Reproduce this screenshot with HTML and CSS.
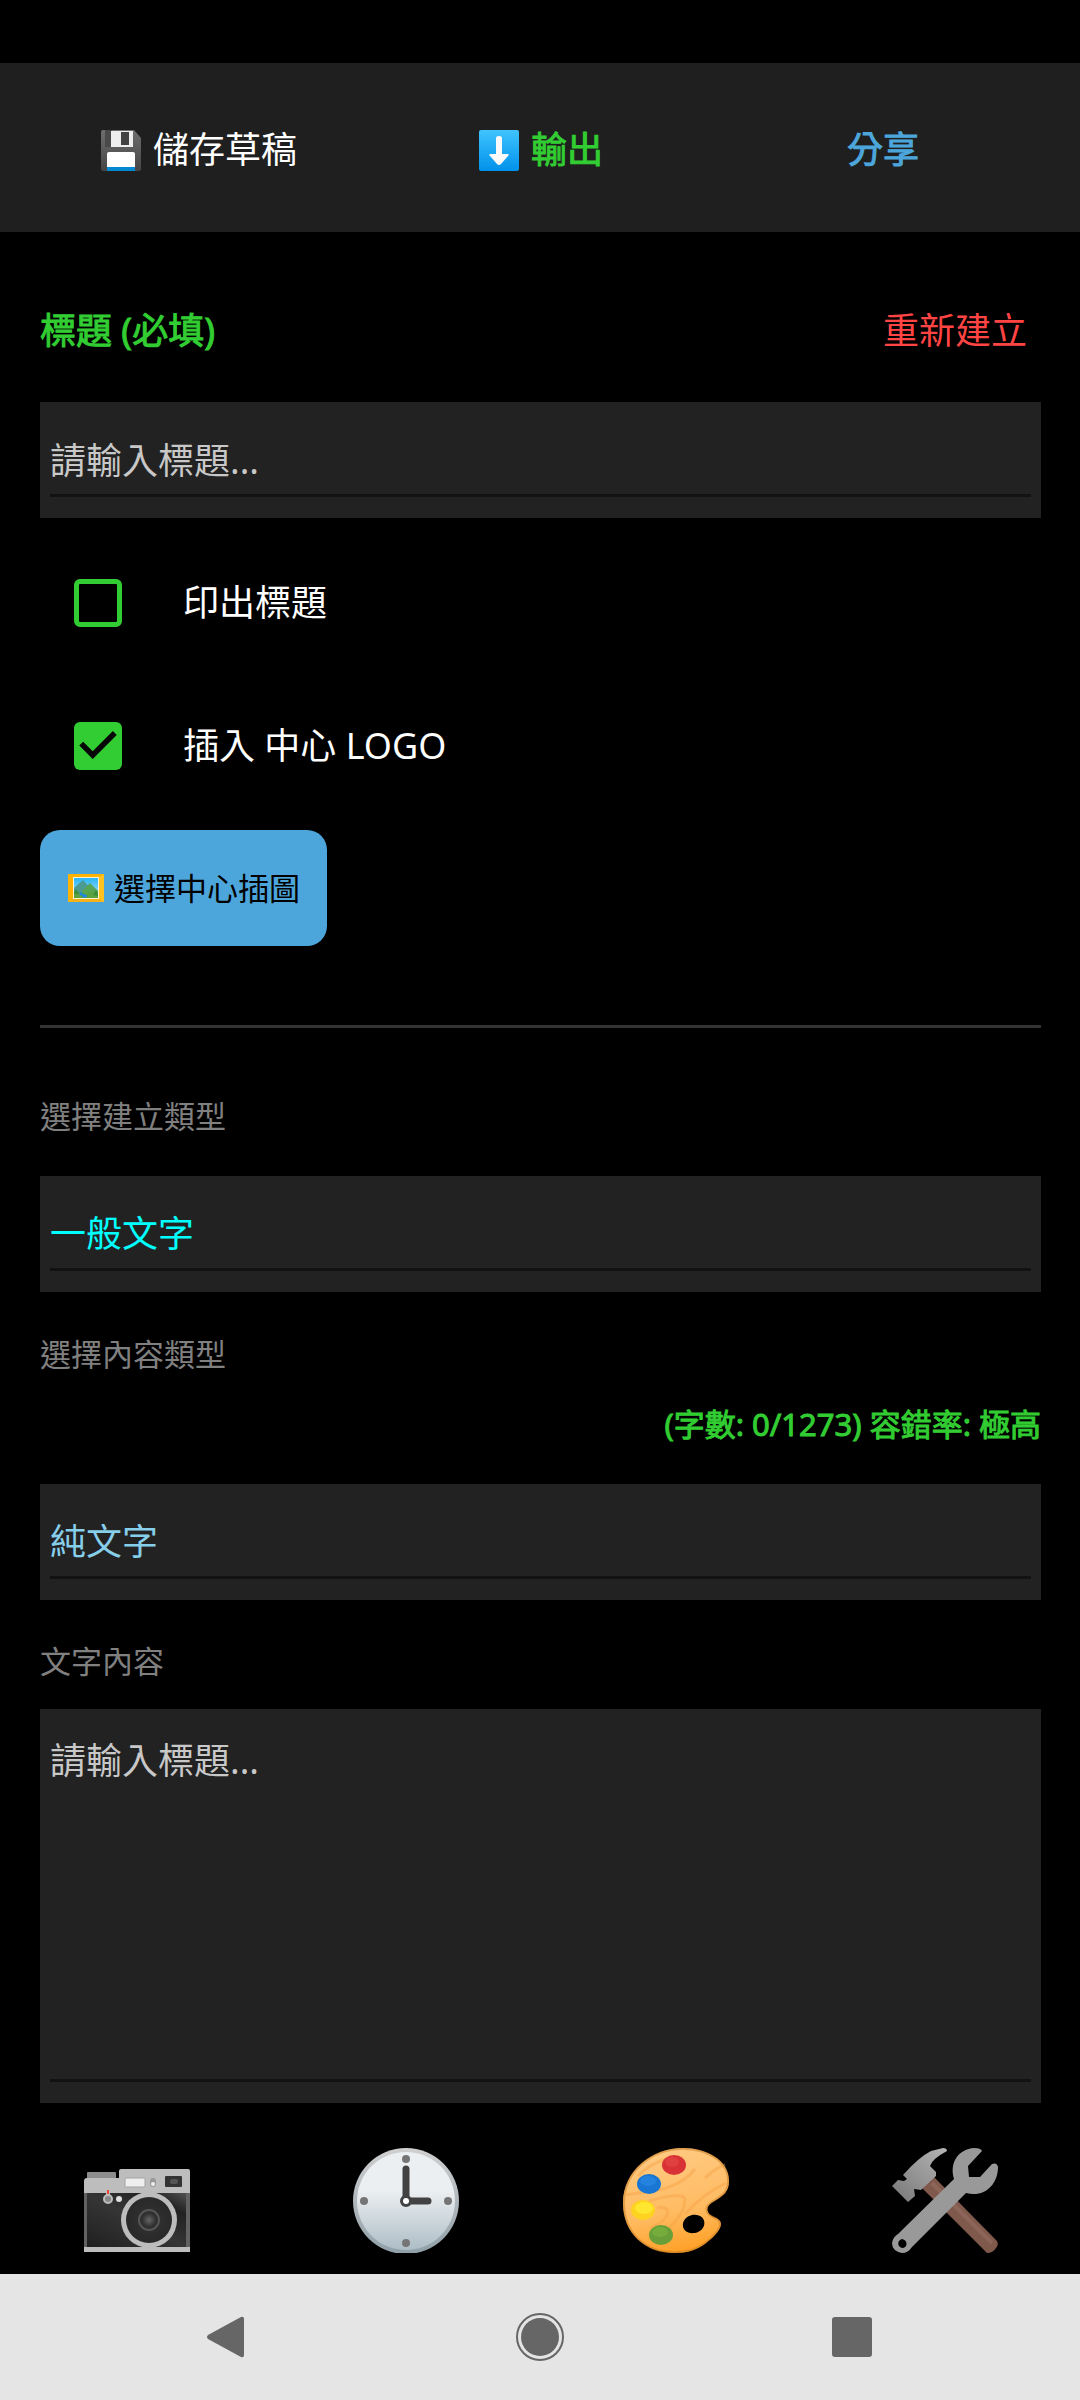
FILE: index.html
```html
<!DOCTYPE html>
<html lang="zh-Hant">
<head>
  <meta charset="UTF-8" />
  <meta name="viewport" content="width=device-width, initial-scale=1" />
  <title>建立 QR Code</title>
  <link rel="stylesheet" href="styles.css">
</head>
<body>
  <header class="toolbar">
    <button type="button" class="tool save">
      <svg class="emoji" viewBox="0 0 40 41" aria-hidden="true">
        <defs>
          <linearGradient id="disk" x1="0" y1="0" x2="0" y2="1">
            <stop offset="0" stop-color="#6e6e6e" /><stop offset="1" stop-color="#454545" />
          </linearGradient>
        </defs>
        <path d="M2 0h31l7 8v31q0 2-2 2H2q-2 0-2-2V2q0-2 2-2z" fill="url(#disk)" />
        <path d="M4 0h7v17H4z" fill="#4a4a4a" />
        <path d="M10 1h22v16H10z" fill="#eee" />
        <path d="M20 2h8v13h-8z" fill="#424242" />
        <path d="M6 24q0-2 2-2h24q2 0 2 2v16H6z" fill="#fff" />
        <path d="M6 37h28v4H6z" fill="#0288d1" />
      </svg>
      儲存草稿
    </button>
    <button type="button" class="tool export">
      <svg class="emoji" viewBox="0 0 40 41" aria-hidden="true">
        <defs>
          <linearGradient id="arrow" x1="0" y1="0" x2="0" y2="1">
            <stop offset="0" stop-color="#40c4ff" /><stop offset="1" stop-color="#0091ea" />
          </linearGradient>
        </defs>
        <rect width="40" height="41" rx="2" fill="url(#arrow)" />
        <path d="M17 8q0-2 3-2t3 2v16h5q3 0 1 2l-7 8q-2 2-4 0l-7-8q-2-2 1-2h5z" fill="#fafafa" />
      </svg>
      輸出
    </button>
    <button type="button" class="tool share">分享</button>
  </header>

  <main>
    <div class="title-row">
      <label for="title" class="title-label">標題 (必填)</label>
      <button type="button" class="reset">重新建立</button>
    </div>
    <div class="field">
      <input type="text" id="title" placeholder="請輸入標題..." />
    </div>

    <div class="checks">
      <label class="check"><input type="checkbox" />印出標題</label>
      <label class="check"><input type="checkbox" checked />插入 中心 LOGO</label>
    </div>

    <button type="button" class="pick">
      <svg class="emoji" viewBox="0 0 36 28" aria-hidden="true">
        <defs>
          <linearGradient id="sky" x1="0" y1="0" x2="0" y2="1">
            <stop offset="0" stop-color="#29b6f6" /><stop offset="1" stop-color="#b3e5fc" />
          </linearGradient>
        </defs>
        <rect width="36" height="28" rx="1" fill="#ffb300" />
        <path d="M0 28l5-4h26l5 4z" fill="#f5b31b" />
        <path d="M36 0l-5 3v21l5 4z" fill="#ffc21f" />
        <rect x="5" y="3" width="26" height="22" fill="#fff3d0" />
        <rect x="6" y="4" width="24" height="20" fill="url(#sky)" />
        <path d="M6 14l9-8 8 9v8H6z" fill="#4b9a94" />
        <path d="M14 17l8-8 8 8v7H14z" fill="#56a556" />
        <path d="M6 17l10 2 14-2v7H6z" fill="#5aa340" />
        <path d="M10 18q6 0 4 2 6 0 5 3l-5 1q3-2-3-3 3-2-1-3z" fill="#1e88e5" />
        <path d="M6 19l2-4 3 5H6zM25 21l3-5 2 4v2z" fill="#388e3c" />
      </svg>
      選擇中心插圖
    </button>

    <hr />

    <label for="kind" class="caption">選擇建立類型</label>
    <div class="field">
      <select id="kind" class="kind">
        <option>一般文字</option>
      </select>
    </div>

    <label for="content-type" class="caption content-caption">選擇內容類型</label>
    <p class="count">(字數: 0/1273) 容錯率: 極高</p>
    <div class="field">
      <select id="content-type" class="content-type">
        <option>純文字</option>
      </select>
    </div>

    <label for="content" class="caption text-caption">文字內容</label>
    <div class="field area">
      <textarea id="content" rows="7" placeholder="請輸入標題..."></textarea>
    </div>
  </main>

  <nav class="tabs">
    <button type="button" aria-label="掃描">
      <svg viewBox="0 0 106 105">
        <defs>
          <radialGradient id="lens"><stop offset="0" stop-color="#666" /><stop offset=".3" stop-color="#303030" /><stop offset="1" stop-color="#292929" /></radialGradient>
          <linearGradient id="leather" x1="0" y1="1" x2="1" y2="0">
            <stop offset="0" stop-color="#202020" /><stop offset=".5" stop-color="#353535" /><stop offset=".8" stop-color="#222" /><stop offset="1" stop-color="#505050" />
          </linearGradient>
        </defs>
        <rect x="3" y="24" width="29" height="9" rx="1" fill="#8c8c8c" />
        <path d="M0 33q0-3 3-3h32v-7q0-2 2-2h67q2 0 2 2v81H0z" fill="#bdbdbd" />
        <path d="M0 45h106v54H0z" fill="#616161" />
        <path d="M3 45h99v54H3z" fill="url(#leather)" />
        <rect x="41" y="30" width="20" height="9" rx="1" fill="#eee" stroke="#a5a5a5" />
        <rect x="66" y="30" width="6" height="9" rx="3" fill="#999" />
        <circle cx="69" cy="36" r="2" fill="#eee" />
        <rect x="81" y="28" width="17" height="11" rx="1" fill="#333" />
        <rect x="86" y="31" width="8" height="5" rx="2" fill="#555" />
        <circle cx="65" cy="72" r="28" fill="#bdbdbd" />
        <circle cx="65" cy="72" r="23" fill="url(#lens)" />
        <circle cx="65" cy="72" r="10" fill="none" stroke="#555" stroke-width="2" />
        <rect x="22" y="41" width="4" height="9" rx="2" fill="#bdbdbd" />
        <circle cx="24" cy="51" r="4" fill="#888" stroke="#bdbdbd" stroke-width="2" />
        <rect x="23" y="42" width="2" height="4" fill="#f44336" />
        <circle cx="35" cy="51" r="3" fill="#e0e0e0" />
      </svg>
    </button>
    <button type="button" aria-label="歷史紀錄">
      <svg viewBox="0 0 106 105">
        <defs>
          <linearGradient id="face" x1="0" y1="0" x2="0" y2="1">
            <stop offset="0" stop-color="#eceff1" /><stop offset=".4" stop-color="#eceff1" /><stop offset="1" stop-color="#adbdc6" />
          </linearGradient>
          <linearGradient id="rim" x1="0" y1="0" x2="0" y2="1">
            <stop offset="0" stop-color="#d0cfd0" /><stop offset="1" stop-color="#90a0a8" />
          </linearGradient>
        </defs>
        <circle cx="53" cy="53" r="53" fill="url(#rim)" />
        <circle cx="53" cy="53" r="49" fill="url(#face)" />
        <g fill="#757575">
          <circle cx="53" cy="11" r="4" /><circle cx="95" cy="53" r="4" />
          <circle cx="53" cy="95" r="4" /><circle cx="11" cy="53" r="4" />
        </g>
        <path d="M53 21v32h22" fill="none" stroke="#424242" stroke-width="7" stroke-linecap="round" />
        <circle cx="53" cy="53" r="6" fill="#424242" />
        <circle cx="53" cy="53" r="3" fill="#fff" />
      </svg>
    </button>
    <button type="button" aria-label="色彩">
      <svg viewBox="0 0 106 105">
        <defs>
          <linearGradient id="wood" x1=".4" y1="0" x2=".6" y2="1">
            <stop offset="0" stop-color="#ffca82" /><stop offset=".6" stop-color="#ffbb62" /><stop offset="1" stop-color="#ff9f24" />
          </linearGradient>
        </defs>
        <path fill-rule="evenodd" fill="url(#wood)" d="M60 0C83 0 106 12 106 33c0 10-5 14-13 19-7 4-10 7-8 12 2 5 9 5 12 9 4 6-6 16-14 22-9 7-19 10-31 10C22 105 0 85 0 55 0 23 29 0 60 0zM69 67c-13 3-12 20 3 18 13-2 13-20-3-18z" />
        <g fill="none" stroke="#f9a64a" stroke-width="3" opacity=".5">
          <path d="M3 47c25-4 52-4 69-26M26 53c20-6 35-7 36-2 0 15-15 32-33 40M34 60c18-3 12 12-6 20M82 30q12-11 20-13M62 66q18-20 41-31M15 28Q35 8 60 10" />
          <path d="M60 1C83 1 105 12 105 33c0 10-5 14-13 19-7 4-10 7-8 12 2 5 9 5 12 9 4 6-6 16-14 22-9 7-19 9-31 9C22 104 1 85 1 55 1 23 29 1 60 1z" stroke="#c77d23" stroke-width="2" />
        </g>
        <ellipse cx="51" cy="17" rx="12" ry="10" fill="#d93236" />
        <ellipse cx="49" cy="14" rx="7" ry="5" fill="#e0403f" />
        <ellipse cx="26" cy="36" rx="12" ry="10" fill="#1976d2" />
        <ellipse cx="25" cy="33" rx="8" ry="5" fill="#2383de" />
        <ellipse cx="20" cy="62" rx="12" ry="10" fill="#fdd220" />
        <ellipse cx="21" cy="60" rx="9" ry="6" fill="#ffe72f" />
        <ellipse cx="38" cy="87" rx="12" ry="10" fill="#689f38" />
        <ellipse cx="37" cy="84" rx="8" ry="5" fill="#76ac3b" />
      </svg>
    </button>
    <button type="button" aria-label="設定">
      <svg viewBox="0 0 106 105">
        <defs>
          <linearGradient id="head" x1="0" y1="1" x2="1" y2="0">
            <stop offset="0" stop-color="#777" /><stop offset="1" stop-color="#b5b5b5" />
          </linearGradient>
        </defs>
        <path d="M29 39l13-10 63 64q2 4-1 7-3 5-9 5z" fill="#80594d" />
        <path d="M40 35l60 60" stroke="#8d6558" stroke-width="4" />
        <path d="M0 38l6-6 6 1 3-2-4-4q16-18 28-24l12-3q4 0 4 3-15 8-17 15l6 6v4L29 42l-7-1 1 7-7 6z" fill="url(#head)" />
        <path fill-rule="evenodd" fill="#999" d="M62 31C57 14 67 1 82 0q7 0 8 3L76 18l1 11h11l12-13q5-2 6 3c0 18-14 31-32 26L20 99q-4 6-10 6Q0 103 0 95q1-6 6-9zM10 91c-5 1-5 8 0 9 6 0 6-8 0-9z" />
      </svg>
    </button>
  </nav>

  <footer class="system-bar">
    <button type="button" aria-label="返回">
      <svg viewBox="0 0 48 48">
        <path d="M4 22L37 4q3-1 3 2v36q0 3-3 2L4 26q-2-2 0-4z" />
      </svg>
    </button>
    <button type="button" aria-label="主畫面">
      <svg viewBox="0 0 48 48">
        <circle cx="24" cy="24" r="23" fill="none" stroke="#666" stroke-width="2" />
        <circle cx="24" cy="24" r="19" />
      </svg>
    </button>
    <button type="button" aria-label="最近使用">
      <svg viewBox="0 0 48 48">
        <rect x="4" y="4" width="40" height="40" rx="3" />
      </svg>
    </button>
  </footer>
</body>
</html>
```
FILE: styles.css
```css
* {
  box-sizing: border-box;
}
body {
  font-family: 'Noto Sans', 'Noto Sans CJK TC', sans-serif;
  font-size: 36px;
  line-height: 48px;
  background: #000;
  color: #fff;
  margin: 0;
  padding-top: 63px;
  min-height: 100vh;
  display: flex;
  flex-direction: column;
}
button, input, select, textarea {
  font: inherit;
  color: inherit;
  background: none;
  border: 0;
  border-radius: 0;
  margin: 0;
  padding: 0;
}
button {
  cursor: pointer;
}
svg {
  display: block;
}

.toolbar {
  display: grid;
  grid-template-columns: repeat(3, 1fr);
  padding: 0 26px 0 28px;
  background: #1f1f1f;
}
.tool {
  display: flex;
  align-items: center;
  justify-content: center;
  gap: 12px;
  padding: 63px 0 58px;
}
.tool .emoji {
  width: 40px;
  height: 41px;
}
.export, .share, .title-label, .count {
  color: #32cd32;
  -webkit-text-stroke: 1px;
}
.share {
  color: #4da6db;
}

main {
  padding: 28px 39px 0 40px;
}
.title-row {
  display: flex;
  align-items: center;
  justify-content: space-between;
  height: 142px;
}
.reset {
  color: #ff4444;
  padding: 0 14px;
}

.field {
  background: #222;
  padding: 34px 10px 21px;
}
.field input, .field select, .field textarea {
  display: block;
  width: 100%;
  height: 61px;
  line-height: 48px;
  padding-bottom: 10px;
  border-bottom: 3px solid #121212;
  outline: none;
  appearance: none;
}
.field.area {
  padding-top: 28px;
}
.field textarea {
  height: auto;
  padding-bottom: 6px;
  resize: none;
}
::placeholder {
  color: #c8c8c8;
  opacity: 1;
}
.field .kind {
  color: #00ffff;
}
.field .content-type {
  color: #87ceeb;
}

.checks {
  padding: 13px 34px;
}
.check {
  display: flex;
  align-items: center;
  gap: 61px;
  height: 143px;
}
.check input {
  appearance: none;
  width: 48px;
  height: 48px;
  border: 5px solid #32cd32;
  border-radius: 6px;
}
.check input:checked {
  border: 0;
  background: #32cd32;
}
.check input:checked::before {
  content: "";
  display: block;
  height: 100%;
  background: #060606;
  clip-path: polygon(39% 78%, 11% 50%, 19% 42%, 39% 62%, 81% 20%, 89% 28%);
}

.pick {
  display: flex;
  align-items: center;
  gap: 10px;
  padding: 34px 27px 34px 28px;
  border-radius: 20px;
  background: #4da6db;
  color: #000;
  font-size: 31px;
}
.pick .emoji {
  width: 36px;
  height: 28px;
}

hr {
  height: 3px;
  margin: 79px 0 64px;
  border: 0;
  background: #333;
}
.caption {
  display: block;
  margin-bottom: 36px;
  font-size: 31px;
  color: #808080;
}
.content-caption {
  margin: 38px 0 22px;
}
.text-caption {
  margin: 37px 0 24px;
}
.count {
  margin: 0 0 36px;
  font-size: 31px;
  text-align: right;
}

.tabs {
  display: grid;
  grid-template-columns: repeat(4, 1fr);
  padding: 45px 0 21px 2px;
}
.tabs button {
  display: flex;
  justify-content: center;
}
.tabs svg {
  width: 106px;
  height: 105px;
}

.system-bar {
  display: grid;
  grid-template-columns: repeat(3, 1fr);
  margin-top: auto;
  padding: 39px 72px;
  background: #e5e5e5;
}
.system-bar button {
  display: flex;
  justify-content: center;
}
.system-bar svg {
  width: 48px;
  height: 48px;
  fill: #666;
}
```
